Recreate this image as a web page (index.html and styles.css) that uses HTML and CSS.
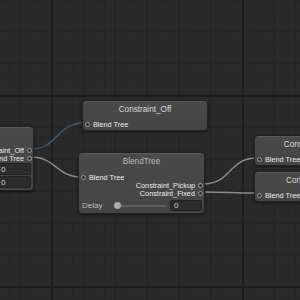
FILE: index.html
```html
<!DOCTYPE html>
<html lang="en">
<head>
    <meta charset="UTF-8">
    <title>Animator Graph</title>
    <link rel="stylesheet" href="styles.css">
</head>
<body>
    <div class="graph">
        <svg class="wires" width="300" height="300" viewBox="0 0 300 300">
            <path class="wire active" d="M31 149 C 58 149, 56 123, 84 123"/>
            <path class="wire" d="M31 157 C 56 157, 56 177, 82 177"/>
            <path class="wire" d="M203 184 C 232 184, 228 158, 257 158"/>
            <path class="wire" d="M203 192 C 230 192, 230 193, 257 193"/>
        </svg>

        <div class="node node-left">
            <div class="title">Constraint</div>
            <div class="row out"><span>Constraint_Off</span><i class="port"></i></div>
            <div class="row out"><span>Blend Tree</span><i class="port"></i></div>
            <div class="field wide">0</div>
            <div class="field wide">0</div>
        </div>

        <div class="node node-off">
            <div class="title">Constraint_Off</div>
            <div class="row"><i class="port"></i><span>Blend Tree</span></div>
        </div>

        <div class="node node-blend">
            <div class="title dim">BlendTree</div>
            <div class="row"><i class="port"></i><span>Blend Tree</span></div>
            <div class="row out"><span>Constraint_Pickup</span><i class="port"></i></div>
            <div class="row out"><span>Constraint_Fixed</span><i class="port"></i></div>
            <div class="param">
                <span class="label">Delay</span>
                <div class="slider"><i class="knob"></i></div>
                <div class="field">0</div>
            </div>
        </div>

        <div class="node node-pickup">
            <div class="title">Constraint_Pickup</div>
            <div class="row"><i class="port"></i><span>Blend Tree</span></div>
        </div>

        <div class="node node-fixed">
            <div class="title">Constraint_Fixed</div>
            <div class="row"><i class="port"></i><span>Blend Tree</span></div>
        </div>
    </div>
</body>
</html>
```

FILE: styles.css
```css
body {
    margin: 0;
    background-color: #282828;
    font-family: "Liberation Sans", Arial, sans-serif;
    overflow: hidden;
}

.graph {
    position: relative;
    width: 300px;
    height: 300px;
    overflow: hidden;
    background-color: #2a2a2a;
    background-image:
        linear-gradient(to right, #1d1d1d 0, #1d1d1d 2px, transparent 2px),
        linear-gradient(to bottom, #1d1d1d 0, #1d1d1d 2px, transparent 2px),
        linear-gradient(to right, #242424 0, #242424 1px, transparent 1px),
        linear-gradient(to bottom, #242424 0, #242424 1px, transparent 1px),
        linear-gradient(to right, #262626 0, #262626 1px, transparent 1px),
        linear-gradient(to bottom, #262626 0, #262626 1px, transparent 1px);
    background-size:
        191px 100%,
        100% 191px,
        31.83px 100%,
        100% 31.83px,
        10.61px 100%,
        100% 10.61px;
    background-position:
        51px 0,
        0 95px,
        51px 0,
        0 95px,
        51px 0,
        0 95px;
}

.wires {
    position: absolute;
    left: 0;
    top: 0;
}

.wire {
    fill: none;
    stroke: #8c8c8c;
    stroke-width: 1.4;
}

.wire.active {
    stroke: #3f5d76;
}

.node {
    position: absolute;
    width: 126px;
    box-sizing: border-box;
    display: flex;
    flex-direction: column;
    padding: 0 2px 2px;
    background: linear-gradient(#4a4a4a, #444);
    border: 1px solid #222;
    border-radius: 4px;
    box-shadow: inset 0 1px 0 #5a5a5a, 0 1px 3px rgba(0, 0, 0, 0.5);
}

.node-left { left: -92px; top: 126px; }
.node-off { left: 82px; top: 100px; }
.node-blend { left: 78px; top: 152px; width: 127px; }
.node-pickup { left: 254px; top: 135px; }
.node-fixed { left: 254px; top: 171px; }

.title {
    height: 18px;
    line-height: 18px;
    text-align: center;
    font-size: 8.2px;
    color: #dadada;
    white-space: nowrap;
    margin-bottom: 1px;
}

.title.dim {
    color: #b8b8b8;
    margin-bottom: 2px;
}

.row {
    display: flex;
    align-items: center;
    gap: 3px;
    height: 8px;
    font-size: 7.3px;
    color: #ececec;
    white-space: nowrap;
}

.row.out {
    justify-content: flex-end;
}

.port {
    width: 3px;
    height: 3px;
    border: 1px solid #a0a0a0;
    border-radius: 50%;
    background: #2e2e2e;
    flex: none;
}

.row.out .port {
    margin-right: -1px;
}

.field {
    box-sizing: border-box;
    height: 11px;
    line-height: 10px;
    padding-left: 3px;
    font-size: 8px;
    color: #d6d6d6;
    background: #2c2c2c;
    border: 1px solid #212121;
    border-radius: 2px;
}

.field.wide {
    width: 34px;
    margin-left: auto;
    margin-top: 1px;
    height: 12px;
    line-height: 11px;
}

.param {
    display: flex;
    align-items: center;
    height: 11px;
    margin-top: 3px;
    gap: 3px;
}

.label {
    font-size: 8px;
    color: #bdbdbd;
    width: 32px;
    padding-left: 1px;
}

.slider {
    position: relative;
    flex: 1;
    height: 2px;
    background: #5e5e5e;
    border-radius: 1px;
}

.knob {
    position: absolute;
    left: -3px;
    top: -3px;
    width: 7px;
    height: 7px;
    border-radius: 50%;
    background: #ababab;
}

.param .field {
    width: 32px;
    height: 11px;
}
```
